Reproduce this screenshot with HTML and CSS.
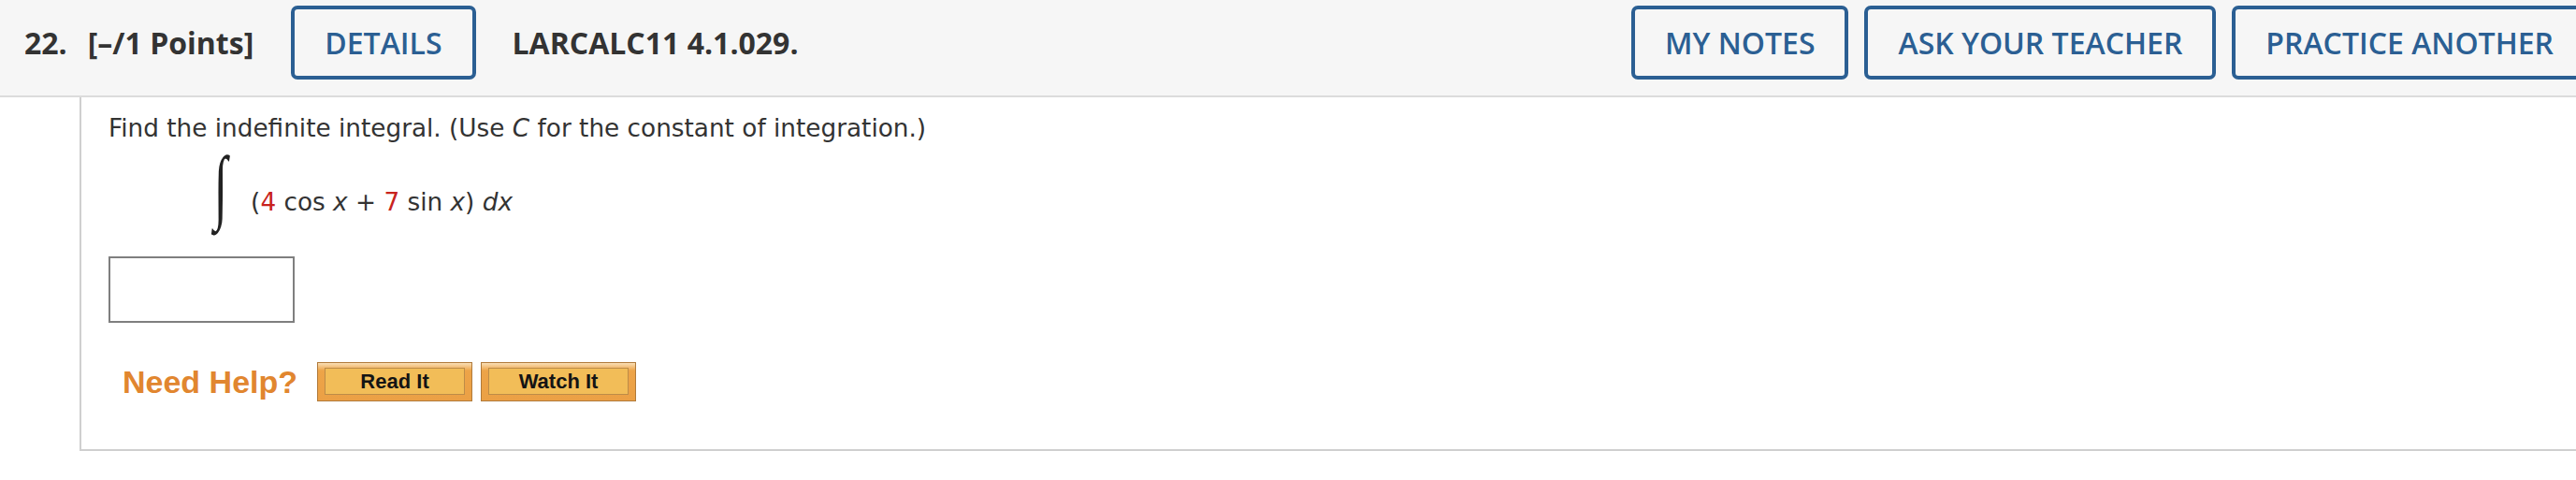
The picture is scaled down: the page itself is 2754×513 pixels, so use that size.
FILE: index.html
```html
<!DOCTYPE html>
<html lang="en">

<head>
    <meta charset="UTF-8">
    <meta name="viewport" content="width=device-width, initial-scale=1.0">
    <title>Question 22</title>
    <link rel="stylesheet" href="styles.css">
</head>

<body>
    <div class="page">
        <div class="qhead">
            <div class="qhead-left">
                <span class="qnum">22.</span>
                <span class="qpoints">[&ndash;/1 Points]</span>
                <button class="btn-outline btn-details">DETAILS</button>
                <span class="qref">LARCALC11 4.1.029.</span>
            </div>
            <div class="qhead-right">
                <button class="btn-outline">MY NOTES</button>
                <button class="btn-outline">ASK YOUR TEACHER</button>
                <button class="btn-outline">PRACTICE ANOTHER</button>
            </div>
        </div>

        <div class="qbody">
            <p class="prompt">Find the indefinite integral. (Use <i>C</i> for the constant of integration.)</p>

            <div class="formula">
                <span class="int-sign">&int;</span>
                <span class="expr">(<span class="red">4</span> cos <i>x</i> + <span class="red">7</span> sin <i>x</i>) <i>dx</i></span>
            </div>

            <input type="text" class="answer">

            <div class="help">
                <span class="help-label">Need Help?</span>
                <button class="help-btn"><span>Read It</span></button>
                <button class="help-btn"><span>Watch It</span></button>
            </div>
        </div>
    </div>
</body>

</html>
```

FILE: styles.css
```css
body {
    margin: 0;
    padding: 0;
    background-color: #fff;
    overflow: hidden;
}

.page {
    width: 2766px;
}

/* question header */
.qhead {
    display: flex;
    justify-content: space-between;
    align-items: flex-start;
    height: 104px;
    padding: 6px 0 0 26px;
    box-sizing: border-box;
    background-color: #f6f6f6;
    border-bottom: 2px solid #dcdcdc;
    font-family: "Open Sans", sans-serif;
    font-size: 32px;
    color: #333;
}

.qhead-left,
.qhead-right {
    display: flex;
    align-items: center;
}

.qhead-right {
    gap: 17px;
}

.qnum,
.qpoints,
.qref {
    font-weight: 700;
    line-height: 79px;
}

.qpoints {
    margin-left: 22px;
}

.btn-details {
    margin-left: 40px;
}

.qref {
    margin-left: 39px;
}

.btn-outline {
    height: 79px;
    padding: 0 32px;
    border: 4px solid #2b5f93;
    border-radius: 7px;
    background-color: transparent;
    color: #2b5f93;
    font-family: "Open Sans", sans-serif;
    font-size: 32px;
    font-weight: 600;
    cursor: pointer;
}

/* question body */
.qbody {
    margin-left: 85px;
    padding: 18px 0 0 29px;
    height: 378px;
    box-sizing: border-box;
    border-left: 2px solid #cfcfcf;
    border-bottom: 2px solid #cfcfcf;
    font-family: "DejaVu Sans", Verdana, sans-serif;
    font-size: 26.3px;
    color: #333;
}

.prompt {
    margin: 0;
}

.formula {
    display: flex;
    align-items: center;
    margin: 15px 0 0 108px;
    height: 76px;
}

.int-sign {
    font-family: "Liberation Serif", serif;
    font-size: 88px;
    line-height: 76px;
    color: #222;
    transform: translateY(-6px) scaleX(0.6);
}

.expr {
    margin-left: 20px;
    padding-top: 22px;
}

.red {
    color: #c8231d;
}

.answer {
    display: block;
    width: 199px;
    height: 71px;
    margin-top: 31px;
    border: 2px solid #7f7f7f;
    box-sizing: border-box;
    background-color: #fff;
}

.help {
    display: flex;
    align-items: center;
    gap: 9px;
    margin: 42px 0 0 15px;
}

.help-label {
    margin-right: 12px;
    font-family: "Liberation Sans", Arial, sans-serif;
    font-size: 34px;
    font-weight: bold;
    color: #e1862f;
}

.help-btn {
    width: 166px;
    height: 42px;
    padding: 5px 7px 6px;
    border: 1px solid #b07a3a;
    background: linear-gradient(#f9dfb6, #eda448 20%, #eba045);
    box-sizing: border-box;
    cursor: pointer;
}

.help-btn span {
    display: block;
    height: 100%;
    border: 1px solid #bd8c48;
    box-sizing: border-box;
    background-color: #f2bd58;
    font-family: "Liberation Sans", Arial, sans-serif;
    font-size: 22px;
    font-weight: bold;
    line-height: 27px;
    color: #141414;
}
```
